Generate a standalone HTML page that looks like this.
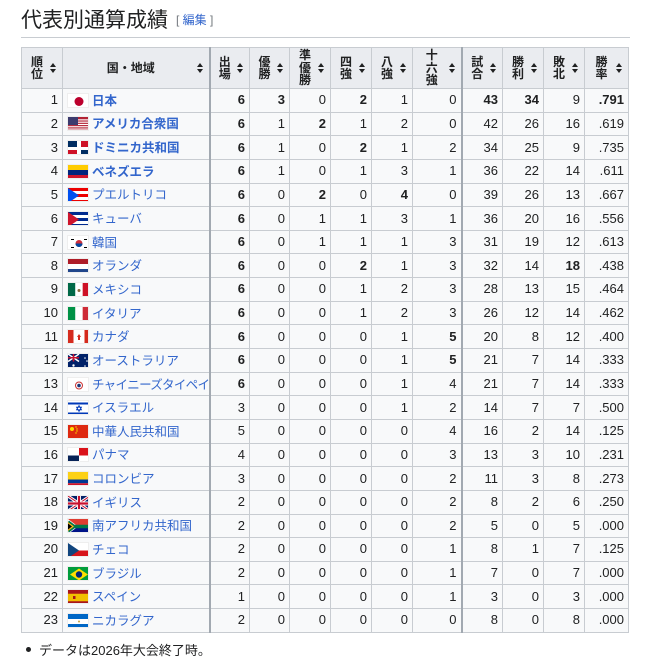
<!DOCTYPE html>
<html><head><meta charset="utf-8"><style>
body{margin:0;background:#fff;font-family:"Liberation Sans","Noto Sans CJK JP",sans-serif;color:#202122;width:650px;height:663px;overflow:hidden;position:relative}
h2{position:absolute;left:21px;top:6px;margin:0;font-weight:normal;font-size:21px;font-family:"Liberation Sans","Noto Sans CJK JP",sans-serif;line-height:28px;width:609px;border-bottom:1px solid #c8ccd1;padding-bottom:2px}
h2 .e{font-size:12px;color:#72777d;margin-left:8px;vertical-align:3px}
h2 .e a{color:#3366cc}
table{position:absolute;left:21px;top:47px;width:607px;border-collapse:collapse;table-layout:fixed;font-size:13px;background:#f8f9fa;border:1px solid #a2a9b1}
td,th{border:1px solid #c8ccd1;padding:0 4px;white-space:nowrap;height:22.65px;line-height:14px;overflow:hidden}
th{background:#eaecf0;font-size:12px;height:40px;line-height:12.5px;position:relative;padding:0 12px 0 2px;text-align:center}
th:after{content:"";position:absolute;right:6px;top:50%;margin-top:-5px;width:0;height:0;border-left:3.5px solid transparent;border-right:3.5px solid transparent;border-bottom:4px solid #202122;}
th:before{content:"";position:absolute;right:6px;top:50%;margin-top:1px;width:0;height:0;border-left:3.5px solid transparent;border-right:3.5px solid transparent;border-top:4px solid #202122;}
td{text-align:right}
td.n{text-align:left;padding-left:4px;font-size:12.5px}
td.n a{color:#3366cc;text-decoration:none}
td.n a.s{letter-spacing:-0.7px}
td.n svg{vertical-align:-3px;margin-right:3px;border:1px solid #eee;box-sizing:border-box}
.tk{border-right:2px solid #a2a9b1}
b{font-weight:bold}
.note{position:absolute;left:26px;top:640px;font-size:13px}
.note:before{content:"";display:inline-block;width:5px;height:5px;border-radius:50%;background:#202122;margin-right:8px;vertical-align:3px}
</style></head><body>
<h2>代表別通算成績<span class="e">[ <a>編集</a> ]</span></h2>
<table>
<colgroup><col style="width:41px"><col style="width:147px"><col style="width:40px"><col style="width:40px"><col style="width:41px"><col style="width:41px"><col style="width:41px"><col style="width:49px"><col style="width:41px"><col style="width:41px"><col style="width:41px"><col style="width:44px"></colgroup>
<tr><th>順<br>位</th><th class="tk">国・地域</th><th>出<br>場</th><th>優<br>勝</th><th>準<br>優<br>勝</th><th>四<br>強</th><th>八<br>強</th><th class="tk">十<br>六<br>強</th><th>試<br>合</th><th>勝<br>利</th><th>敗<br>北</th><th>勝<br>率</th></tr>
<tr><td>1</td><td class="n tk"><svg width="22" height="15"><rect width="22" height="15" fill="#fff"/><circle cx="11" cy="7.5" r="4.5" fill="#bc002d"/></svg><a><b>日本</b></a></td><td><b>6</b></td><td><b>3</b></td><td>0</td><td><b>2</b></td><td>1</td><td class="tk">0</td><td><b>43</b></td><td><b>34</b></td><td>9</td><td><b>.791</b></td></tr>
<tr><td>2</td><td class="n tk"><svg width="22" height="15"><rect width="22" height="15" fill="#b22234"/><rect y="2.3" width="22" height="1.15" fill="#fff"/><rect y="4.6" width="22" height="1.15" fill="#fff"/><rect y="6.9" width="22" height="1.15" fill="#fff"/><rect y="9.2" width="22" height="1.15" fill="#fff"/><rect y="11.5" width="22" height="1.15" fill="#fff"/><rect width="10" height="8" fill="#3c3b6e"/></svg><a><b>アメリカ合衆国</b></a></td><td><b>6</b></td><td>1</td><td><b>2</b></td><td>1</td><td>2</td><td class="tk">0</td><td>42</td><td>26</td><td>16</td><td>.619</td></tr>
<tr><td>3</td><td class="n tk"><svg width="22" height="15"><rect width="22" height="15" fill="#fff"/><rect width="9" height="6" fill="#002d62"/><rect x="13" width="9" height="6" fill="#ce1126"/><rect y="9" width="9" height="6" fill="#ce1126"/><rect x="13" y="9" width="9" height="6" fill="#002d62"/></svg><a><b>ドミニカ共和国</b></a></td><td><b>6</b></td><td>1</td><td>0</td><td><b>2</b></td><td>1</td><td class="tk">2</td><td>34</td><td>25</td><td>9</td><td>.735</td></tr>
<tr><td>4</td><td class="n tk"><svg width="22" height="15"><rect width="22" height="5" fill="#fc0"/><rect y="5" width="22" height="5" fill="#00247d"/><rect y="10" width="22" height="5" fill="#cf142b"/></svg><a><b>ベネズエラ</b></a></td><td><b>6</b></td><td>1</td><td>0</td><td>1</td><td>3</td><td class="tk">1</td><td>36</td><td>22</td><td>14</td><td>.611</td></tr>
<tr><td>5</td><td class="n tk"><svg width="22" height="15"><rect width="22" height="15" fill="#ed0000"/><rect y="3" width="22" height="3" fill="#fff"/><rect y="9" width="22" height="3" fill="#fff"/><path d="M0 0L11 7.5L0 15Z" fill="#0050f0"/></svg><a>プエルトリコ</a></td><td><b>6</b></td><td>0</td><td><b>2</b></td><td>0</td><td><b>4</b></td><td class="tk">0</td><td>39</td><td>26</td><td>13</td><td>.667</td></tr>
<tr><td>6</td><td class="n tk"><svg width="22" height="15"><rect width="22" height="15" fill="#002a8f"/><rect y="3" width="22" height="3" fill="#fff"/><rect y="9" width="22" height="3" fill="#fff"/><path d="M0 0L11 7.5L0 15Z" fill="#cf142b"/></svg><a>キューバ</a></td><td><b>6</b></td><td>0</td><td>1</td><td>1</td><td>3</td><td class="tk">1</td><td>36</td><td>20</td><td>16</td><td>.556</td></tr>
<tr><td>7</td><td class="n tk"><svg width="22" height="15"><rect width="22" height="15" fill="#fff"/><circle cx="11" cy="7.5" r="3.5" fill="#cd2e3a"/><path d="M7.5 7.5a3.5 3.5 0 0 0 7 0z" fill="#0047a0"/><g fill="#000"><rect x="3" y="3" width="3" height="1"/><rect x="16" y="3" width="3" height="1"/><rect x="3" y="11" width="3" height="1"/><rect x="16" y="11" width="3" height="1"/></g></svg><a>韓国</a></td><td><b>6</b></td><td>0</td><td>1</td><td>1</td><td>1</td><td class="tk">3</td><td>31</td><td>19</td><td>12</td><td>.613</td></tr>
<tr><td>8</td><td class="n tk"><svg width="22" height="15"><rect width="22" height="5" fill="#ae1c28"/><rect y="5" width="22" height="5" fill="#fff"/><rect y="10" width="22" height="5" fill="#21468b"/></svg><a>オランダ</a></td><td><b>6</b></td><td>0</td><td>0</td><td><b>2</b></td><td>1</td><td class="tk">3</td><td>32</td><td>14</td><td><b>18</b></td><td>.438</td></tr>
<tr><td>9</td><td class="n tk"><svg width="22" height="15"><rect width="7.33" height="15" fill="#006847"/><rect x="7.33" width="7.34" height="15" fill="#fff"/><rect x="14.67" width="7.33" height="15" fill="#ce1126"/><circle cx="11" cy="7.5" r="1.5" fill="#8c6a3a"/></svg><a>メキシコ</a></td><td><b>6</b></td><td>0</td><td>0</td><td>1</td><td>2</td><td class="tk">3</td><td>28</td><td>13</td><td>15</td><td>.464</td></tr>
<tr><td>10</td><td class="n tk"><svg width="22" height="15"><rect width="7.33" height="15" fill="#009246"/><rect x="7.33" width="7.34" height="15" fill="#fff"/><rect x="14.67" width="7.33" height="15" fill="#ce2b37"/></svg><a>イタリア</a></td><td><b>6</b></td><td>0</td><td>0</td><td>1</td><td>2</td><td class="tk">3</td><td>26</td><td>12</td><td>14</td><td>.462</td></tr>
<tr><td>11</td><td class="n tk"><svg width="22" height="15"><rect width="22" height="15" fill="#fff"/><rect width="5.5" height="15" fill="#d52b1e"/><rect x="16.5" width="5.5" height="15" fill="#d52b1e"/><path d="M11 4l2 3-1 0 0 3-2 0 0-3-1 0z" fill="#d52b1e"/></svg><a>カナダ</a></td><td><b>6</b></td><td>0</td><td>0</td><td>0</td><td>1</td><td class="tk"><b>5</b></td><td>20</td><td>8</td><td>12</td><td>.400</td></tr>
<tr><td>12</td><td class="n tk"><svg width="22" height="15"><rect width="22" height="15" fill="#012169"/><path d="M0 0L11 7.5M11 0L0 7.5" stroke="#fff" stroke-width="1.5"/><path d="M5.5 0V7.5M0 3.75H11" stroke="#c8102e" stroke-width="1.5"/><g fill="#fff"><circle cx="17" cy="4" r=".8"/><circle cx="19" cy="7" r=".8"/><circle cx="17" cy="12" r=".8"/><circle cx="5.5" cy="11.5" r="1.2"/></g></svg><a>オーストラリア</a></td><td><b>6</b></td><td>0</td><td>0</td><td>0</td><td>1</td><td class="tk"><b>5</b></td><td>21</td><td>7</td><td>14</td><td>.333</td></tr>
<tr><td>13</td><td class="n tk"><svg width="22" height="15"><rect width="22" height="15" fill="#fff"/><circle cx="11" cy="7.5" r="3.5" fill="none" stroke="#c33" stroke-width="1"/><circle cx="11" cy="7.5" r="1.8" fill="#1c3578"/></svg><a class="s">チャイニーズタイペイ</a></td><td><b>6</b></td><td>0</td><td>0</td><td>0</td><td>1</td><td class="tk">4</td><td>21</td><td>7</td><td>14</td><td>.333</td></tr>
<tr><td>14</td><td class="n tk"><svg width="22" height="15"><rect width="22" height="15" fill="#fff"/><rect y="1.5" width="22" height="2" fill="#0038b8"/><rect y="11.5" width="22" height="2" fill="#0038b8"/><path d="M11 4.5l2.5 4.3h-5zM11 10.5l2.5-4.3h-5z" fill="none" stroke="#0038b8" stroke-width=".8"/></svg><a>イスラエル</a></td><td>3</td><td>0</td><td>0</td><td>0</td><td>1</td><td class="tk">2</td><td>14</td><td>7</td><td>7</td><td>.500</td></tr>
<tr><td>15</td><td class="n tk"><svg width="22" height="15"><rect width="22" height="15" fill="#de2910"/><circle cx="4" cy="4" r="2" fill="#ffde00"/><g fill="#ffde00"><circle cx="8" cy="2" r=".7"/><circle cx="9" cy="4" r=".7"/><circle cx="9" cy="6" r=".7"/><circle cx="8" cy="8" r=".7"/></g></svg><a>中華人民共和国</a></td><td>5</td><td>0</td><td>0</td><td>0</td><td>0</td><td class="tk">4</td><td>16</td><td>2</td><td>14</td><td>.125</td></tr>
<tr><td>16</td><td class="n tk"><svg width="22" height="15"><rect width="22" height="15" fill="#fff"/><rect x="11" width="11" height="7.5" fill="#da121a"/><rect y="7.5" width="11" height="7.5" fill="#072357"/></svg><a>パナマ</a></td><td>4</td><td>0</td><td>0</td><td>0</td><td>0</td><td class="tk">3</td><td>13</td><td>3</td><td>10</td><td>.231</td></tr>
<tr><td>17</td><td class="n tk"><svg width="22" height="15"><rect width="22" height="7.5" fill="#fcd116"/><rect y="7.5" width="22" height="3.75" fill="#003893"/><rect y="11.25" width="22" height="3.75" fill="#ce1126"/></svg><a>コロンビア</a></td><td>3</td><td>0</td><td>0</td><td>0</td><td>0</td><td class="tk">2</td><td>11</td><td>3</td><td>8</td><td>.273</td></tr>
<tr><td>18</td><td class="n tk"><svg width="22" height="15"><rect width="22" height="15" fill="#012169"/><path d="M0 0L22 15M22 0L0 15" stroke="#fff" stroke-width="3"/><path d="M0 0L22 15M22 0L0 15" stroke="#c8102e" stroke-width="1"/><path d="M11 0V15M0 7.5H22" stroke="#fff" stroke-width="4"/><path d="M11 0V15M0 7.5H22" stroke="#c8102e" stroke-width="2.2"/></svg><a>イギリス</a></td><td>2</td><td>0</td><td>0</td><td>0</td><td>0</td><td class="tk">2</td><td>8</td><td>2</td><td>6</td><td>.250</td></tr>
<tr><td>19</td><td class="n tk"><svg width="22" height="15"><rect width="22" height="7.5" fill="#e03c31"/><rect y="7.5" width="22" height="7.5" fill="#001489"/><path d="M0 0L10 7.5L0 15" fill="#fff"/><path d="M0 3L6 7.5H22M6 7.5L0 12" stroke="#007749" stroke-width="3.5" fill="none"/><path d="M0 3L6 7.5L0 12Z" fill="#ffb81c"/><path d="M0 4.5L4 7.5L0 10.5Z" fill="#000"/></svg><a>南アフリカ共和国</a></td><td>2</td><td>0</td><td>0</td><td>0</td><td>0</td><td class="tk">2</td><td>5</td><td>0</td><td>5</td><td>.000</td></tr>
<tr><td>20</td><td class="n tk"><svg width="22" height="15"><rect width="22" height="7.5" fill="#fff"/><rect y="7.5" width="22" height="7.5" fill="#d7141a"/><path d="M0 0L11 7.5L0 15Z" fill="#11457e"/></svg><a>チェコ</a></td><td>2</td><td>0</td><td>0</td><td>0</td><td>0</td><td class="tk">1</td><td>8</td><td>1</td><td>7</td><td>.125</td></tr>
<tr><td>21</td><td class="n tk"><svg width="22" height="15"><rect width="22" height="15" fill="#009c3b"/><path d="M11 1.5L20 7.5L11 13.5L2 7.5Z" fill="#ffdf00"/><circle cx="11" cy="7.5" r="3.2" fill="#002776"/></svg><a>ブラジル</a></td><td>2</td><td>0</td><td>0</td><td>0</td><td>0</td><td class="tk">1</td><td>7</td><td>0</td><td>7</td><td>.000</td></tr>
<tr><td>22</td><td class="n tk"><svg width="22" height="15"><rect width="22" height="15" fill="#aa151b"/><rect y="3.75" width="22" height="7.5" fill="#f1bf00"/><rect x="5" y="6" width="2.5" height="3" fill="#aa151b"/></svg><a>スペイン</a></td><td>1</td><td>0</td><td>0</td><td>0</td><td>0</td><td class="tk">1</td><td>3</td><td>0</td><td>3</td><td>.000</td></tr>
<tr><td>23</td><td class="n tk"><svg width="22" height="15"><rect width="22" height="15" fill="#0067c6"/><rect y="5" width="22" height="5" fill="#fff"/><circle cx="11" cy="7.5" r="1" fill="#c8a040"/></svg><a>ニカラグア</a></td><td>2</td><td>0</td><td>0</td><td>0</td><td>0</td><td class="tk">0</td><td>8</td><td>0</td><td>8</td><td>.000</td></tr>
</table>
<div class="note">データは2026年大会終了時。</div>
</body></html>
